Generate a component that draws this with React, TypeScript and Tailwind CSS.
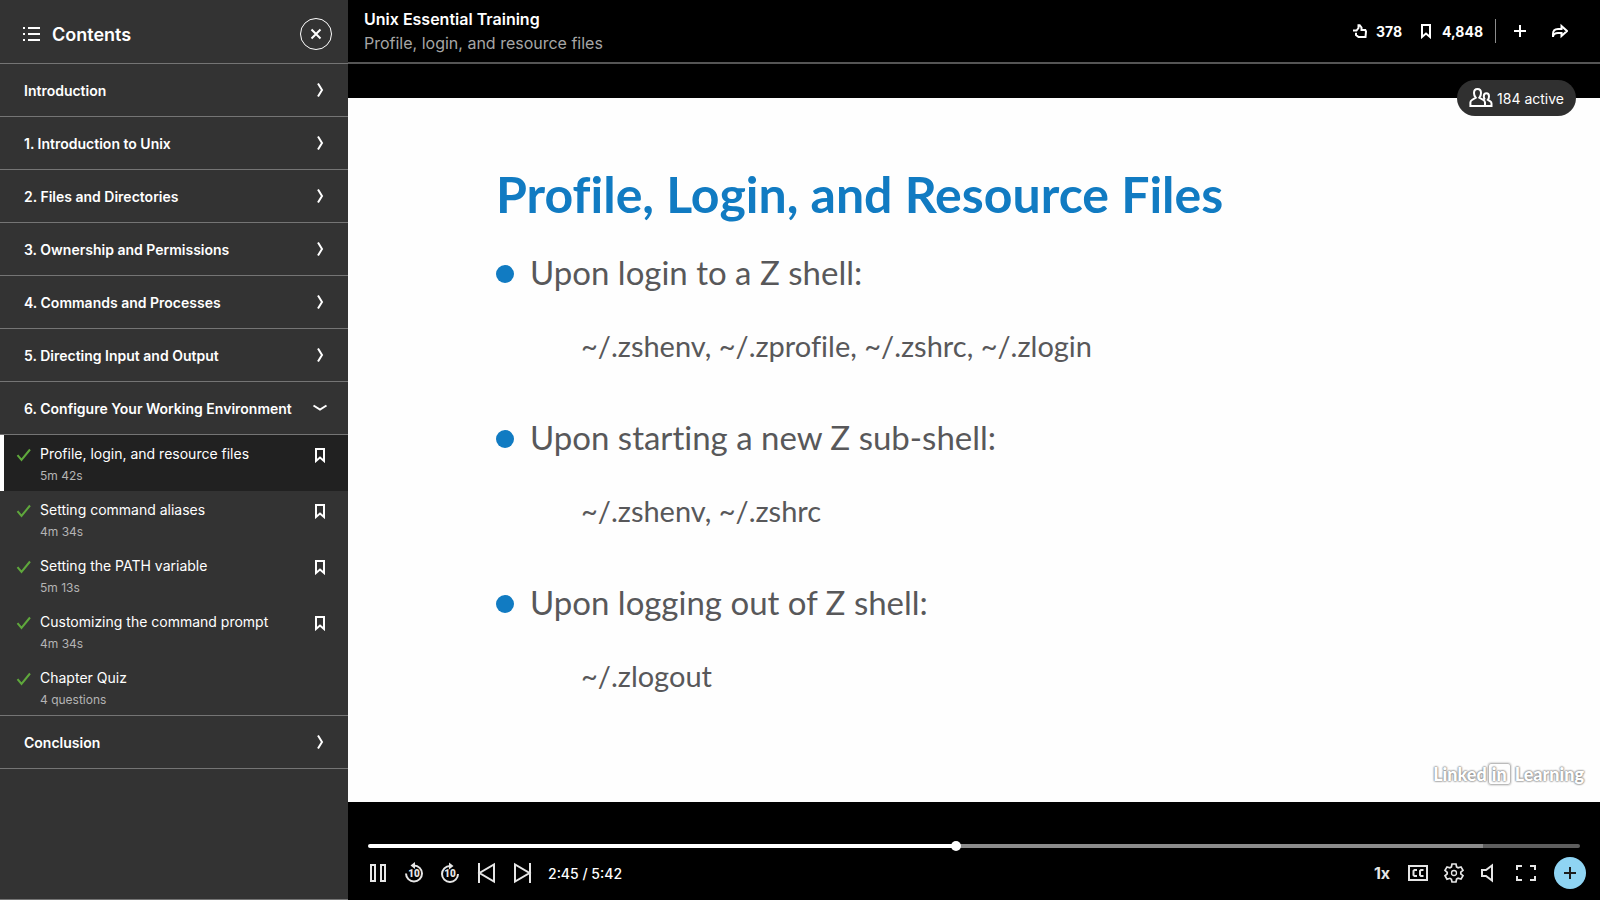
import { useState } from "react";
import type { ReactNode } from "react";

type Lesson = { title: string; meta: string; bookmark: boolean };

const chaptersBefore = [
  "Introduction",
  "1. Introduction to Unix",
  "2. Files and Directories",
  "3. Ownership and Permissions",
  "4. Commands and Processes",
  "5. Directing Input and Output",
];

const lessons: Lesson[] = [
  { title: "Profile, login, and resource files", meta: "5m 42s", bookmark: true },
  { title: "Setting command aliases", meta: "4m 34s", bookmark: true },
  { title: "Setting the PATH variable", meta: "5m 13s", bookmark: true },
  { title: "Customizing the command prompt", meta: "4m 34s", bookmark: true },
  { title: "Chapter Quiz", meta: "4 questions", bookmark: false },
];

const slideItems = [
  { heading: "Upon login to a Z shell:", files: "~/.zshenv, ~/.zprofile, ~/.zshrc, ~/.zlogin" },
  { heading: "Upon starting a new Z sub-shell:", files: "~/.zshenv, ~/.zshrc" },
  { heading: "Upon logging out of Z shell:", files: "~/.zlogout" },
];

function Icon({ size = 24, width = 2, children }: { size?: number; width?: number; children: ReactNode }) {
  return (
    <svg
      width={size}
      height={size}
      viewBox={`0 0 ${size} ${size}`}
      fill="none"
      stroke="currentColor"
      strokeWidth={width}
      className="shrink-0"
      aria-hidden="true"
    >
      {children}
    </svg>
  );
}

const BookmarkIcon = () => (
  <Icon size={16}>
    <path d="M4 2h8v12l-4-3.4L4 14z" />
  </Icon>
);

function Chapter({ title, open = false }: { title: string; open?: boolean }) {
  return (
    <button
      type="button"
      aria-expanded={open}
      className="flex h-[53px] w-full items-center justify-between border-b border-[#757575] pr-5 pl-6 text-left text-sm font-semibold"
    >
      <span className="pt-0.5">{title}</span>
      <Icon size={16}>
        {open ? <path d="M1.5 5.5L8 9.5l6.5-4" /> : <path d="M6 1.5l4 6.5-4 6.5" />}
      </Icon>
    </button>
  );
}

function LessonRow({ lesson, active }: { lesson: Lesson; active: boolean }) {
  return (
    <li
      className={
        active
          ? "flex h-14 border-l-4 border-white bg-[#212121] pr-5"
          : "flex h-14 border-l-4 border-transparent pr-5"
      }
    >
      <a href="#lesson" className="flex min-w-0 flex-1 pl-3">
        <span className="mt-3 mr-2 text-[#5fa83c]">
          <Icon size={16}>
            <path d="M1.5 8.2L5.5 13 14 2.5" />
          </Icon>
        </span>
        <span className="flex flex-col pt-[9px]">
          <span className="text-sm leading-5">{lesson.title}</span>
          <span className="text-xs leading-6 text-[#b4b4b4]">{lesson.meta}</span>
        </span>
      </a>
      {lesson.bookmark && (
        <button type="button" aria-label={`Save ${lesson.title}`} className="mt-3 h-4 w-4">
          <BookmarkIcon />
        </button>
      )}
    </li>
  );
}

function Sidebar() {
  return (
    <aside className="flex w-[348px] shrink-0 flex-col border-b border-[#757575] bg-[#333333]">
      <header className="flex h-16 shrink-0 items-center border-b border-[#757575] pt-1 pr-4 pl-5">
        <Icon size={24}>
          <path d="M3 6h2M3 12h2M3 18h2M8 6h12M8 12h12M8 18h12" />
        </Icon>
        <h2 className="ml-2 flex-1 pt-0.5 text-lg font-semibold">Contents</h2>
        <button
          type="button"
          aria-label="Close contents"
          className="flex h-8 w-8 items-center justify-center rounded-full border border-white"
        >
          <Icon size={16}>
            <path d="M3.5 3.5l9 9M12.5 3.5l-9 9" />
          </Icon>
        </button>
      </header>
      <nav aria-label="Contents">
        {chaptersBefore.map((title) => (
          <Chapter key={title} title={title} />
        ))}
        <Chapter title="6. Configure Your Working Environment" open />
        <ul className="border-b border-[#757575]">
          {lessons.map((lesson, i) => (
            <LessonRow key={lesson.title} lesson={lesson} active={i === 0} />
          ))}
        </ul>
        <Chapter title="Conclusion" />
      </nav>
    </aside>
  );
}

function TopBar() {
  return (
    <header className="flex h-16 shrink-0 items-center justify-between border-b-2 border-[#555555] pr-8 pl-4">
      <div>
        <h1 className="text-base leading-6 font-semibold">Unix Essential Training</h1>
        <p className="text-base leading-6 text-[#a6a6a6]">Profile, login, and resource files</p>
      </div>
      <div className="flex items-center text-sm font-bold">
        <button type="button" className="flex items-center gap-2">
          <Icon size={16}>
            <path d="M1 7.500h3.500L6.500 5V2.200h1.200L9.500 4.500V7h3.800l.7 1.500-.5 5.500H6.500L4 12V9.800" />
          </Icon>
          <span className="pt-0.5">378</span>
        </button>
        <button type="button" className="ml-4 flex items-center gap-2">
          <BookmarkIcon />
          <span className="pt-0.5">4,848</span>
        </button>
        <span className="mx-3 h-6 w-px bg-[#8c8c8c]" />
        <button type="button" aria-label="Add" className="ml-1 flex">
          <Icon size={16}>
            <path d="M8 2v12M2 8h12" />
          </Icon>
        </button>
        <button type="button" aria-label="Share" className="ml-6 flex">
          <Icon size={16}>
            <path d="M1 14v-3c0-3 2-5 5-5h3.500V3L15 8l-5.500 5v-3H6c-2.800 0-5 1.500-5 4z" />
          </Icon>
        </button>
      </div>
    </header>
  );
}

function Slide() {
  return (
    <section className="relative flex min-h-0 flex-1 items-center justify-center">
      <div className="relative aspect-video max-h-full w-full bg-[#fefefe] px-[148px] pt-[66px] font-['Lato',sans-serif] text-[#58585a] [font-variant-ligatures:none]">
        <h2 className="text-[50px] leading-[60px] font-bold text-[#117bc2]">Profile, Login, and Resource Files</h2>
        <ul className="mt-[18px]">
          {slideItems.map((item) => (
            <li key={item.heading} className="h-[165px]">
              <div className="flex items-center gap-4">
                <span className="mt-1 h-[18px] w-[18px] rounded-full bg-[#117bc2]" />
                <p className="text-[33px] leading-[60px]">{item.heading}</p>
              </div>
              <p className="mt-[14px] pl-[85px] text-[29px] leading-[60px]">{item.files}</p>
            </li>
          ))}
        </ul>
        <div className="absolute right-4 bottom-4 flex items-center text-lg leading-6 font-black text-white [text-shadow:0_0_2px_#888,0_0_2px_#888,0_0_2px_#999]">
          <span>Linked</span>
          <span className="mr-1 ml-px rounded-[3px] border border-[#bbbbbb] px-[3px] leading-5 shadow-[0_0_2px_#999]">
            in
          </span>
          <span>Learning</span>
        </div>
      </div>
      <div className="absolute top-4 right-6 flex h-9 items-center gap-1 rounded-full bg-[#303030] px-3 text-sm">
        <Icon size={24}>
          <path d="M8.500 3C6.300 3 5 4.600 5 7c0 2 .6 3.400 1.700 4.700L3 14c-1 .6-1.600 1.500-1.600 2.600V20H16v-3.400c0-1.100-.6-2-1.600-2.600l-4-2.300C11.400 10.400 12 9 12 7c0-2.400-1.300-4-3.500-4z" />
          <path d="M16 20h6.500v-2.500c0-.9-.4-1.600-1.200-2.100L18.800 13.800c.8-.9 1.200-1.900 1.200-3.300 0-2-1-3.200-2.600-3.200s-2.600 1.200-2.600 3.200c0 1.300.4 2.300 1.100 3.200" />
        </Icon>
        <span className="pt-0.5">184 active</span>
      </div>
    </section>
  );
}

function Control({ label, children }: { label: string; children: ReactNode }) {
  return (
    <button type="button" aria-label={label} className="flex h-[34px] w-9 items-center justify-center">
      {children}
    </button>
  );
}

const Ten = () => (
  <text
    x="12"
    y="16"
    textAnchor="middle"
    fill="currentColor"
    stroke="none"
    className="font-['Roboto',sans-serif] text-[10px] font-black"
  >
    10
  </text>
);

function Player() {
  const [position, setPosition] = useState(165.9);
  const played = (position / 342) * 100;
  const track = `linear-gradient(to right, #fff ${played}%, #8c8c8c ${played}%, #8c8c8c 92%, #5e5e5e 92%)`;
  return (
    <footer className="shrink-0 pb-[10px]">
      <div className="flex h-5 items-center px-5">
        <input
          type="range"
          aria-label="Playback position"
          min={0}
          max={342}
          step="any"
          value={position}
          onChange={(e) => setPosition(Number(e.target.value))}
          style={{ background: track }}
          className="h-1 w-full appearance-none rounded-full [&::-webkit-slider-thumb]:h-[10px] [&::-webkit-slider-thumb]:w-[10px] [&::-webkit-slider-thumb]:appearance-none [&::-webkit-slider-thumb]:rounded-full [&::-webkit-slider-thumb]:bg-white"
        />
      </div>
      <div className="flex items-center justify-between pr-[14px] pl-3 text-[#e6e6e6]">
        <div className="flex items-center">
          <Control label="Pause">
            <Icon>
              <path d="M5 4h4v16H5zM15 4h4v16h-4z" />
            </Icon>
          </Control>
          <Control label="Back 10 seconds">
            <Icon>
              <path d="M4 12.500a8 8 0 1 0 8-8" />
              <path d="M13 1v7L8.500 4.500z" fill="currentColor" stroke="none" />
              <Ten />
            </Icon>
          </Control>
          <Control label="Forward 10 seconds">
            <Icon>
              <path d="M20 13a8 8 0 1 1-8-8h1" />
              <path d="M11 1.500v7L15.500 5z" fill="currentColor" stroke="none" />
              <Ten />
            </Icon>
          </Control>
          <Control label="Previous">
            <Icon>
              <path d="M5 2v20M20 3.500v17L5.500 12z" />
            </Icon>
          </Control>
          <Control label="Next">
            <Icon>
              <path d="M20 2v20M5 3.500v17L19.500 12z" />
            </Icon>
          </Control>
          <span className="ml-2 pt-0.5 text-sm font-medium text-white">2:45 / 5:42</span>
        </div>
        <div className="flex items-center">
          <button type="button" aria-label="Playback speed 1x" className="h-[34px] w-9 text-base font-bold">
            1x
          </button>
          <Control label="Captions">
            <Icon>
              <path d="M3 5h18v14H3z" />
              <path d="M11 9H8.500l-1 1v4l1 1H11M17.500 9H15l-1 1v4l1 1h2.500" />
            </Icon>
          </Control>
          <Control label="Settings">
            <Icon width={1.7}>
              <path d="M10 3h4l.6 2.900 1.500.9 2.900-.9 2 3.400-2.200 1.900v1.600l2.200 1.900-2 3.400-2.900-.9-1.500.9L14 21h-4l-.6-2.800-1.500-.9-2.900.9-2-3.400 2.200-1.900v-1.600L3 9.300l2-3.400 2.900.9 1.500-.9z" />
              <circle cx="12" cy="12" r="2.500" strokeWidth="1.300" />
            </Icon>
          </Control>
          <Control label="Volume">
            <Icon>
              <path d="M4 9h4l6-4.500v15L8 15H4z" />
            </Icon>
          </Control>
          <Control label="Full screen">
            <Icon>
              <path d="M3 9V5h5M16 5h5v4M21 15v4h-5M8 19H3v-4" />
            </Icon>
          </Control>
          <button
            type="button"
            aria-label="Add note"
            className="ml-[10px] flex h-8 w-8 items-center justify-center rounded-full bg-[#8fd4f3] text-[#1d1d1d]"
          >
            <Icon size={16}>
              <path d="M8 2v12M2 8h12" />
            </Icon>
          </button>
        </div>
      </div>
    </footer>
  );
}

export default function App() {
  return (
    <div className="flex min-h-screen bg-black font-['Inter',sans-serif] text-white">
      <Sidebar />
      <main className="flex min-w-0 flex-1 flex-col">
        <TopBar />
        <Slide />
        <Player />
      </main>
    </div>
  );
}
